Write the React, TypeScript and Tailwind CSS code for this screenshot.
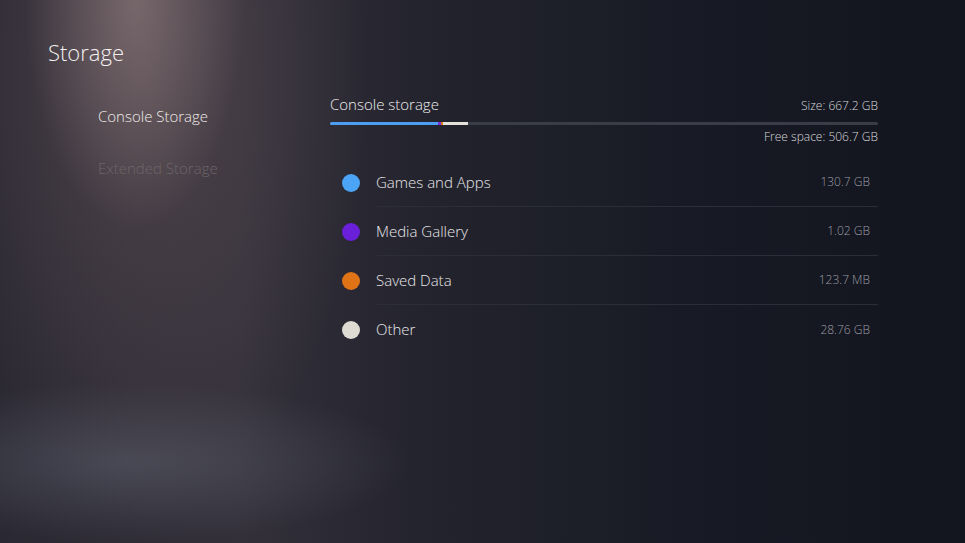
const rows = [
  { label: "Games and Apps", value: "130.7 GB", dot: "bg-[#4ba4f6]" },
  { label: "Media Gallery", value: "1.02 GB", dot: "bg-[#6a1fd8]" },
  { label: "Saved Data", value: "123.7 MB", dot: "bg-[#df7316]" },
  { label: "Other", value: "28.76 GB", dot: "bg-[#dedbd3]" }
];

const bg =
  "bg-[radial-gradient(ellipse_110px_230px_at_135px_0px,rgba(150,130,132,0.6),transparent),radial-gradient(ellipse_220px_440px_at_145px_80px,rgba(105,88,92,0.5),transparent),radial-gradient(ellipse_280px_80px_at_130px_462px,rgba(95,100,115,0.5),transparent),linear-gradient(90deg,#2a2832_0%,#33303a_25%,#23232d_45%,#181b25_70%,#12151e_100%)]";

export default function App() {
  return (
    <div
      className={`h-[543px] w-[965px] overflow-hidden font-light text-white ${bg}`}
      style={{ fontFamily: '"Open Sans", "Noto Sans", sans-serif' }}
    >
      <h1 className="ml-[48px] pt-[37px] text-[22px] leading-[30px] font-light text-[#f2f0f0]">Storage</h1>

      <div className="mt-[25px] flex">
        <nav className="ml-[98px] w-[232px] pt-[12px] text-[15px] leading-[24px]">
          <div className="text-[#efeaea]">Console Storage</div>
          <div className="mt-[28px] text-[#6e6468]">Extended Storage</div>
        </nav>

        <section className="w-[548px]">
          <div className="flex items-baseline justify-between">
            <span className="text-[15px] leading-[24px] text-[#eeeeee]">Console storage</span>
            <span className="text-[12px] leading-[24px] text-[#d8d8dc]">Size: 667.2 GB</span>
          </div>
          <div className="mt-[4px] flex h-[3px] overflow-hidden rounded-full bg-[#3a3d47]">
            <div className="w-[108px] bg-[#4c9ff0]" />
            <div className="w-[3px] bg-[#7b2fd6]" />
            <div className="w-[2px] bg-[#e07a1e]" />
            <div className="w-[25px] bg-[#e4e1da]" />
          </div>
          <div className="mt-[4px] text-right text-[12px] leading-[16px] text-[#d8d8dc]">Free space: 506.7 GB</div>

          <ul className="mt-[13px]">
            {rows.map((row, i) => (
              <li className="flex h-[49px] items-center" key={row.label}>
                <span className={`ml-[12px] size-[18px] shrink-0 rounded-full ${row.dot}`} />
                <div
                  className={`ml-[16px] flex h-full flex-1 items-center justify-between pr-[8px] ${i < rows.length - 1 ? "border-b border-[#2b2e39]" : ""}`}
                >
                  <span className="text-[15px] text-[#e8e8ea]">{row.label}</span>
                  <span className="text-[12px] text-[#9c9ca4]">{row.value}</span>
                </div>
              </li>
            ))}
          </ul>
        </section>
      </div>
    </div>
  );
}
